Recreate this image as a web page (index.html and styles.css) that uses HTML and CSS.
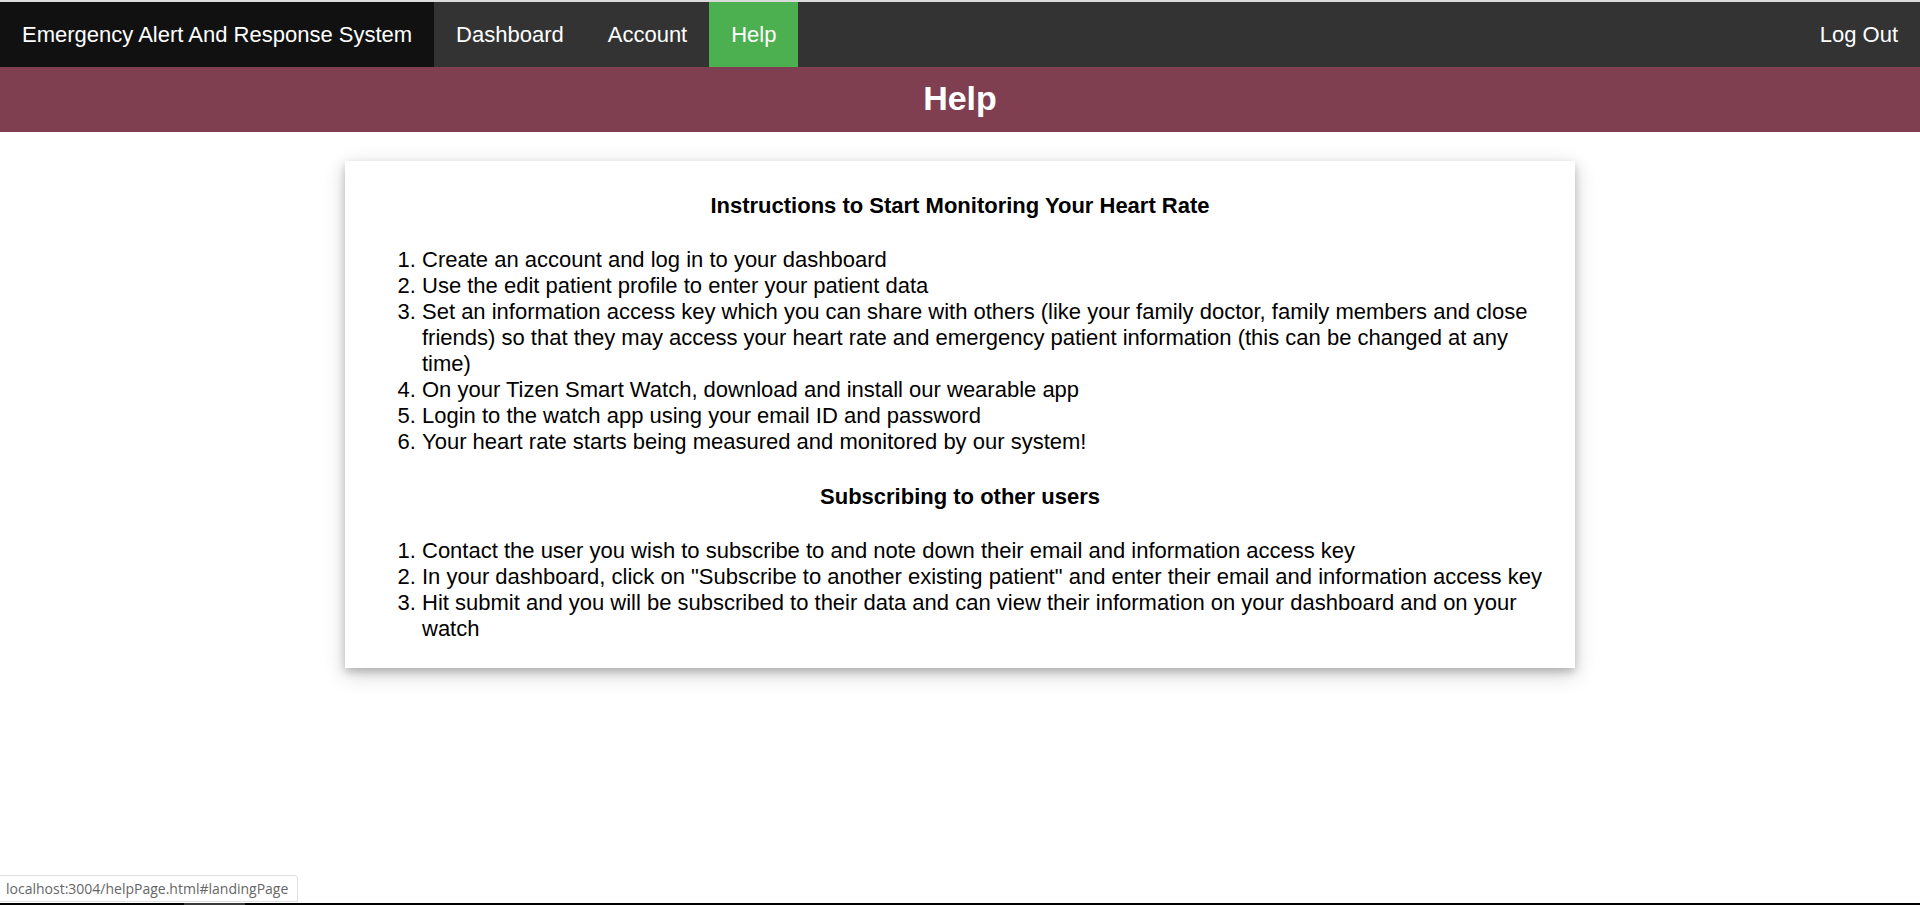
FILE: index.html
```html
<!DOCTYPE html>
<html lang="en">
<head>
<meta charset="utf-8">
<title>Help</title>
<link rel="stylesheet" href="styles.css">
</head>
<body>
<nav class="topnav">
  <a class="brand" href="#">Emergency Alert And Response System</a>
  <a class="nav-link" href="#">Dashboard</a>
  <a class="nav-link" href="#">Account</a>
  <a class="nav-link active" href="#">Help</a>
  <a class="nav-link logout" href="#">Log Out</a>
</nav>
<header class="page-title">
  <h1>Help</h1>
</header>
<main class="content">
  <section class="card">
    <h3 class="card-heading">Instructions to Start Monitoring Your Heart Rate</h3>
    <ol class="steps">
      <li>Create an account and log in to your dashboard</li>
      <li>Use the edit patient profile to enter your patient data</li>
      <li>Set an information access key which you can share with others (like your family doctor, family members and close friends) so that they may access your heart rate and emergency patient information (this can be changed at any time)</li>
      <li>On your Tizen Smart Watch, download and install our wearable app</li>
      <li>Login to the watch app using your email ID and password</li>
      <li>Your heart rate starts being measured and monitored by our system!</li>
    </ol>
    <h3 class="card-heading">Subscribing to other users</h3>
    <ol class="steps">
      <li>Contact the user you wish to subscribe to and note down their email and information access key</li>
      <li>In your dashboard, click on "Subscribe to another existing patient" and enter their email and information access key</li>
      <li>Hit submit and you will be subscribed to their data and can view their information on your dashboard and on your watch</li>
    </ol>
  </section>
</main>
<div class="status-bubble">localhost:3004/helpPage.html#landingPage</div>
<div class="bottom-edge"><span class="bottom-piece"></span></div>
</body>
</html>
```

FILE: styles.css
```css
html, body {
  margin: 0;
  padding: 0;
  background: #ffffff;
}

body {
  font-family: "Liberation Sans", Arial, sans-serif;
  font-size: 22px;
  color: #000;
  border-top: 2px solid #dcdcdc;
  min-height: 903px;
  box-sizing: border-box;
}

.topnav {
  display: flex;
  background: #333333;
  height: 65px;
}

.topnav a {
  display: block;
  color: #ffffff;
  text-decoration: none;
  padding: 20px 22px;
  line-height: 25px;
  font-size: 22px;
}

.topnav .brand {
  background: #111111;
  padding-right: 22px;
}

.topnav .active {
  background: #4CAF50;
}

.topnav .logout {
  margin-left: auto;
}

.page-title {
  background: #7f3f51;
  color: #ffffff;
  text-align: center;
  padding: 12px 0 14px;
}

.page-title h1 {
  margin: 0;
  font-size: 34px;
  line-height: 39px;
  font-weight: bold;
}

.content {
  padding-top: 29px;
}

.card {
  width: 1230px;
  margin: 0 auto;
  box-sizing: border-box;
  padding: 32px 22px 26px 37px;
  background: #fff;
  box-shadow: 0 4px 8px 0 rgba(0, 0, 0, 0.2), 0 6px 20px 0 rgba(0, 0, 0, 0.19);
}

.card-heading {
  margin: 0 0 28px;
  text-align: center;
  font-size: 22px;
  line-height: 26px;
  font-weight: bold;
  padding-right: 15px;
}

.steps {
  margin: 0 0 29px;
  padding-left: 40px;
  line-height: 26px;
}

.steps:last-child {
  margin-bottom: 0;
}

.status-bubble {
  position: fixed;
  left: 0;
  bottom: 3px;
  height: 27px;
  line-height: 26px;
  padding: 0 9px 0 6px;
  font-family: "Open Sans", "Noto Sans", sans-serif;
  font-size: 14px;
  color: #666;
  background: #fff;
  border: 1px solid #e2e2e2;
  border-left: none;
  border-radius: 0 4px 0 0;
  box-sizing: border-box;
}

.bottom-edge {
  position: fixed;
  left: 0;
  right: 0;
  bottom: 0;
  height: 2px;
  background: #000;
}

.bottom-piece {
  position: absolute;
  left: 184px;
  width: 61px;
  top: 0;
  height: 2px;
  background: #3a3a3a;
}
```
